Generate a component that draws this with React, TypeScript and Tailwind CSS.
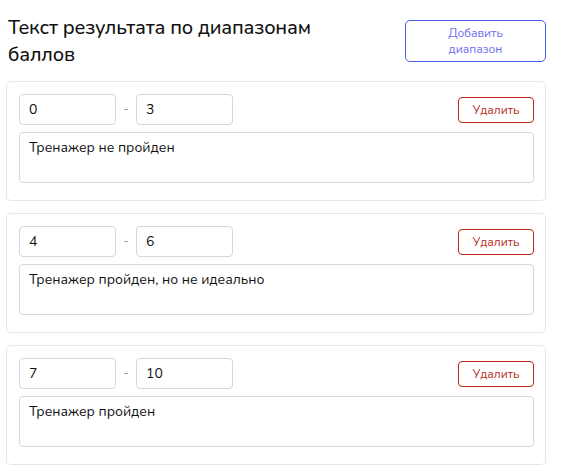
import React, { useState } from 'react';

interface Range {
  id: number;
  from: string;
  to: string;
  text: string;
}

const initialRanges: Range[] = [
  { id: 1, from: '0', to: '3', text: 'Тренажер не пройден' },
  { id: 2, from: '4', to: '6', text: 'Тренажер пройден, но не идеально' },
  { id: 3, from: '7', to: '10', text: 'Тренажер пройден' },
];

const RangeCard: React.FC<{
  range: Range;
  onChange: (r: Range) => void;
  onRemove: () => void;
}> = ({ range, onChange, onRemove }) => (
  <div className="border border-[#e6e6e9] rounded-[5px] pt-[12px] pl-[12px] pr-[11px] pb-[17px] bg-white">
    <div className="flex items-center">
      <input
        value={range.from}
        onChange={(e) => onChange({ ...range, from: e.target.value })}
        className="w-[97px] h-[31px] border border-[#d6d6de] rounded-[4px] px-[9px] text-[14px] text-[#111] outline-none"
      />
      <span className="w-[20px] text-center text-[#9a9aa5] text-[13px]">-</span>
      <input
        value={range.to}
        onChange={(e) => onChange({ ...range, to: e.target.value })}
        className="w-[97px] h-[31px] border border-[#d6d6de] rounded-[4px] px-[9px] text-[14px] text-[#111] outline-none"
      />
      <button
        onClick={onRemove}
        className="ml-auto w-[76px] h-[26px] border border-[#b7271c] rounded-[4px] text-[#b7271c] text-[12px] bg-white"
      >
        Удалить
      </button>
    </div>
    <textarea
      value={range.text}
      onChange={(e) => onChange({ ...range, text: e.target.value })}
      className="mt-[7px] block w-full h-[51px] border border-[#d6d6de] rounded-[4px] px-[9px] py-[5px] text-[14px] leading-[20px] text-[#111] resize-none outline-none"
    />
  </div>
);

export default function App() {
  const [ranges, setRanges] = useState<Range[]>(initialRanges);

  const addRange = () => {
    setRanges([...ranges, { id: Date.now(), from: '', to: '', text: '' }]);
  };

  return (
    <div className="w-[566px] bg-white px-[6px] pt-[14px] font-['Nunito','Lato','Noto_Sans',sans-serif] text-[#111]">
      <div className="flex items-start justify-between pl-[2px] pr-[14px]">
        <h2 className="text-[20px] leading-[27px] tracking-[-0.2px] font-medium w-[340px]">
          Текст результата по диапазонам баллов
        </h2>
        <button
          onClick={addRange}
          className="mt-[6px] w-[141px] h-[42px] border border-[#4a5ef0] rounded-[5px] text-[#6b6df2] text-[12px] leading-[16px] bg-white"
        >
          Добавить
          <br />
          диапазон
        </button>
      </div>
      <div className="mt-[13px] flex flex-col gap-[12px] w-[540px]">
        {ranges.map((r) => (
          <RangeCard
            key={r.id}
            range={r}
            onChange={(nr) => setRanges(ranges.map((x) => (x.id === r.id ? nr : x)))}
            onRemove={() => setRanges(ranges.filter((x) => x.id !== r.id))}
          />
        ))}
      </div>
    </div>
  );
}
